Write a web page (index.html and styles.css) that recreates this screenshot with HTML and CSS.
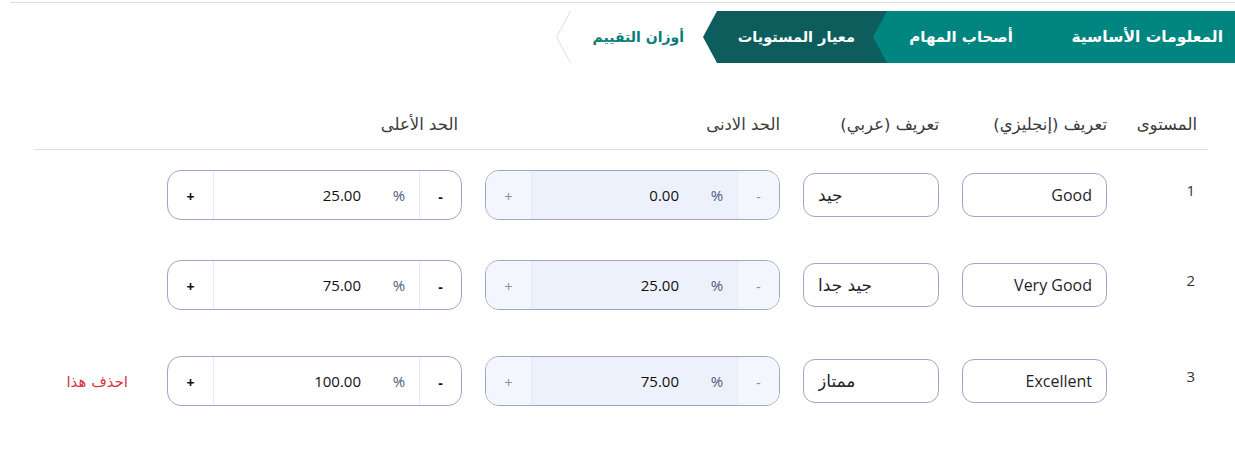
FILE: index.html
```html
<!DOCTYPE html>
<html lang="ar" dir="rtl">
<head>
<meta charset="utf-8">
<title>معيار المستويات</title>
<link rel="stylesheet" href="styles.css">
</head>
<body>
<div class="page">
  <div class="topline"></div>
  <nav class="steps">
    <div class="step step-done step-1"><span>المعلومات الأساسية</span></div>
    <div class="step step-done step-2"><span>أصحاب المهام</span></div>
    <div class="step step-active step-3"><span>معيار المستويات</span></div>
    <div class="step step-next step-4"><span>أوزان التقييم</span>
      <svg class="chev" width="16" height="52" viewBox="0 0 16 52"><polyline points="14.5,0 0.5,26 14.5,52" fill="none" stroke="#dedede" stroke-width="1"/></svg>
    </div>
  </nav>

  <section class="levels">
    <div class="grid head">
      <div class="hc hc-level">المستوى</div>
      <div class="hc">تعريف (إنجليزي)</div>
      <div class="hc">تعريف (عربي)</div>
      <div class="hc">الحد الادنى</div>
      <div class="hc hc-max">الحد الأعلى</div>
      <div class="hc"></div>
    </div>

    <div class="grid row">
      <div class="level">1</div>
      <input class="tin tin-en" type="text" value="Good">
      <input class="tin tin-ar" type="text" value="جيد">
      <div class="group group-disabled">
        <span class="gbtn gbtn-minus">-</span>
        <span class="addon">%</span>
        <input class="gin" type="text" value="0.00" disabled>
        <span class="gbtn gbtn-plus">+</span>
      </div>
      <div class="group">
        <span class="gbtn gbtn-minus">-</span>
        <span class="addon">%</span>
        <input class="gin" type="text" value="25.00">
        <span class="gbtn gbtn-plus">+</span>
      </div>
      <div class="actions"></div>
    </div>

    <div class="grid row">
      <div class="level">2</div>
      <input class="tin tin-en" type="text" value="Very Good">
      <input class="tin tin-ar" type="text" value="جيد جدا">
      <div class="group group-disabled">
        <span class="gbtn gbtn-minus">-</span>
        <span class="addon">%</span>
        <input class="gin" type="text" value="25.00" disabled>
        <span class="gbtn gbtn-plus">+</span>
      </div>
      <div class="group">
        <span class="gbtn gbtn-minus">-</span>
        <span class="addon">%</span>
        <input class="gin" type="text" value="75.00">
        <span class="gbtn gbtn-plus">+</span>
      </div>
      <div class="actions"></div>
    </div>

    <div class="grid row row-last">
      <div class="level">3</div>
      <input class="tin tin-en" type="text" value="Excellent">
      <input class="tin tin-ar" type="text" value="ممتاز">
      <div class="group group-disabled">
        <span class="gbtn gbtn-minus">-</span>
        <span class="addon">%</span>
        <input class="gin" type="text" value="75.00" disabled>
        <span class="gbtn gbtn-plus">+</span>
      </div>
      <div class="group">
        <span class="gbtn gbtn-minus">-</span>
        <span class="addon">%</span>
        <input class="gin" type="text" value="100.00">
        <span class="gbtn gbtn-plus">+</span>
      </div>
      <div class="actions"><a class="delete" href="#">احذف هذا</a></div>
    </div>
  </section>
</div>
</body>
</html>
```

FILE: styles.css
```css
* { box-sizing: border-box; }

html, body {
  margin: 0;
  padding: 0;
  background: #ffffff;
}

body {
  font-family: "Open Sans", "DejaVu Sans", sans-serif;
  color: #333333;
  width: 1235px;
  height: 451px;
  overflow: hidden;
}

.page {
  direction: rtl;
}

.topline {
  height: 1px;
  background: #dcdcdc;
  margin: 2px 0 0 10px;
}

/* ---------- steps ---------- */
.steps {
  display: flex;
  margin-top: 8px;
  height: 52px;
}

.step {
  height: 52px;
  display: flex;
  align-items: center;
  font-family: "DejaVu Sans", sans-serif;
  font-weight: bold;
  font-size: 14.5px;
  white-space: nowrap;
  clip-path: polygon(14px 0, 100% 0, 100% 100%, 14px 100%, 0 50%);
}

.step-done { background: #008580; color: #ffffff; }
.step-active { background: #0d5d5d; color: #ffffff; }
.step-next {
  background: #ffffff;
  color: #0b7d78;
  clip-path: none;
}

.step-1 { width: 206px; padding-right: 12px; z-index: 4; font-size: 15.5px; }
.step-2 { width: 170px; padding-right: 30px; margin-right: -14px; z-index: 3; font-size: 15px; }
.step-3 { width: 184px; padding-right: 32px; margin-right: -14px; z-index: 2; }
.step-4 { width: 161px; padding-right: 33px; margin-right: -14px; z-index: 1; font-size: 14px; }

.chev {
  margin-right: auto;
  display: block;
  flex: none;
}

/* ---------- table ---------- */
.levels {
  margin: 37px 27px 0 34px;
}

.grid {
  display: grid;
  grid-template-columns: 78px 145px 136px 295px 295px 1fr;
  column-gap: 23px;
  align-items: center;
}

.head {
  height: 50px;
  border-bottom: 1px solid #dee2e6;
  padding-bottom: 1px;
}

.hc {
  font-family: "DejaVu Sans", sans-serif;
  font-size: 16.5px;
  color: #3a3a3a;
  white-space: nowrap;
}

.hc-level { padding-right: 11px; }
.hc-max { padding-right: 4px; }

.row {
  height: 90px;
}

.row-last {
  margin-top: 6px;
}

.level {
  padding-right: 13px;
  padding-bottom: 10px;
  font-size: 15px;
  color: #333333;
}

.tin {
  width: 100%;
  height: 44px;
  border: 1px solid #9ba7c3;
  border-radius: 12px;
  padding: 0 14px;
  font-family: "Open Sans", "DejaVu Sans", sans-serif;
  font-size: 16px;
  color: #1f1f1f;
  background: #ffffff;
  outline: none;
}

.tin-en { text-align: right; direction: ltr; }
.tin-ar { text-align: left; direction: ltr; font-family: "DejaVu Sans", sans-serif; font-size: 17px; }

.group {
  display: flex;
  height: 50px;
  border: 1px solid #9ba7c3;
  border-radius: 14px;
  overflow: hidden;
  background: #ffffff;
}

.gbtn {
  flex: none;
  display: flex;
  align-items: center;
  justify-content: center;
  padding-top: 2px;
  font-size: 14px;
  font-weight: bold;
  color: #111111;
}

.gbtn-minus {
  width: 42px;
  border-left: 1px solid #e6ebf7;
}

.gbtn-plus {
  width: 46px;
  border-right: 1px solid #e6ebf7;
}

.addon {
  flex: none;
  width: 40px;
  display: flex;
  align-items: center;
  justify-content: center;
  font-size: 15px;
  color: #4d5d7d;
}

.gin {
  flex: 1;
  min-width: 0;
  border: 0;
  outline: none;
  background: transparent;
  padding: 0 18px 0 0;
  text-align: right;
  direction: ltr;
  font-family: "Open Sans", sans-serif;
  font-size: 15px;
  color: #111111;
}

.gin:disabled { color: #111111; -webkit-text-fill-color: #111111; opacity: 1; }

.group-disabled {
  background: #ecf1fb;
}

.group-disabled .gbtn {
  background: #f4f6fd;
  color: #8d8d8d;
  font-weight: normal;
}

.actions {
  padding-right: 16px;
}

.delete {
  font-family: "DejaVu Sans", sans-serif;
  font-size: 15px;
  color: #d7343f;
  text-decoration: none;
  white-space: nowrap;
}
```
